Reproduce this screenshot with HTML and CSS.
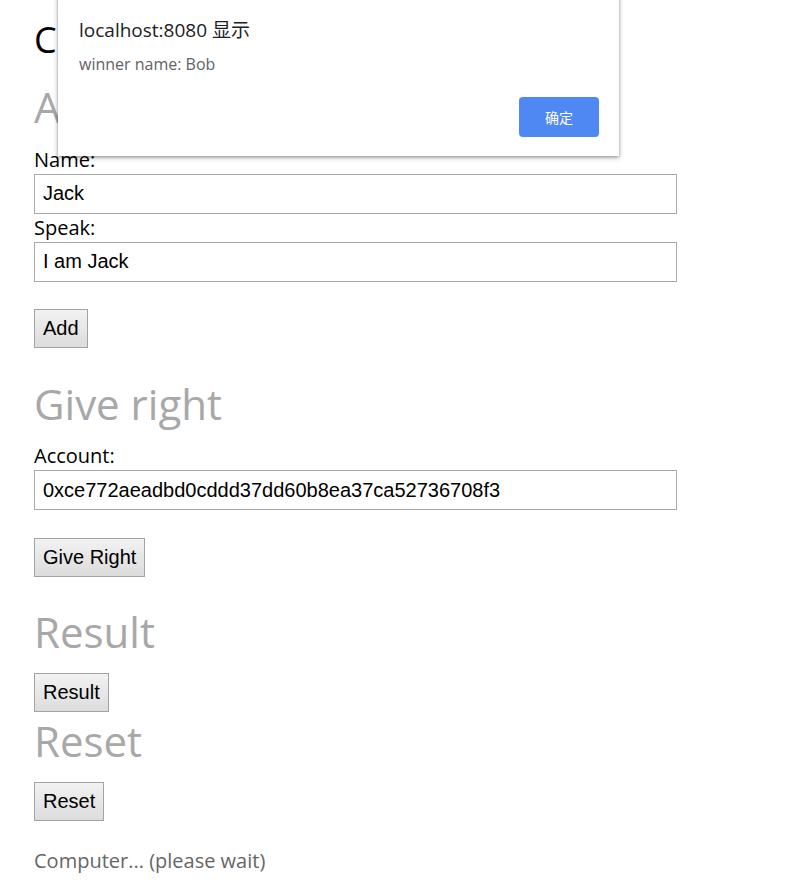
FILE: index.html
```html
<!DOCTYPE html>
<html lang="en">
<head>
<meta charset="utf-8">
<title>Candidates</title>
<link rel="stylesheet" href="styles.css">
</head>
<body>
<div class="page">
  <h1 class="title">Candidates</h1>

  <h2 class="section section-first">Add candidate</h2>
  <label class="field-label" for="name">Name:</label>
  <input class="text-input" id="name" type="text" value="Jack">
  <label class="field-label" for="speak">Speak:</label>
  <input class="text-input" id="speak" type="text" value="I am Jack">
  <div class="actions"><button class="btn">Add</button></div>

  <h2 class="section section-give">Give right</h2>
  <label class="field-label" for="account">Account:</label>
  <input class="text-input" id="account" type="text" value="0xce772aeadbd0cddd37dd60b8ea37ca52736708f3">
  <div class="actions actions-wide"><button class="btn">Give Right</button></div>

  <h2 class="section section-result">Result</h2>
  <div class="actions actions-tight"><button class="btn">Result</button></div>
  <h2 class="section section-reset">Reset</h2>
  <div class="actions actions-tight"><button class="btn">Reset</button></div>

  <p class="status">Computer... (please wait)</p>
</div>

<div class="alert" role="dialog">
  <div class="alert-title">localhost:8080 显示</div>
  <div class="alert-message">winner name: Bob</div>
  <div class="alert-actions"><button class="alert-ok">确定</button></div>
</div>
</body>
</html>
```

FILE: styles.css
```css
html, body {
  margin: 0;
  padding: 0;
  background: #ffffff;
}

body {
  font-family: "Open Sans", "Noto Sans CJK SC", sans-serif;
  color: #000;
}

.page {
  padding: 0 34px;
  display: flex;
  flex-direction: column;
  align-items: flex-start;
}

.title {
  font-family: "Open Sans", sans-serif;
  font-weight: 400;
  font-size: 36px;
  line-height: normal;
  margin: 15px 0 0;
  color: #000;
}

.section {
  font-family: "Open Sans", sans-serif;
  font-weight: 400;
  font-size: 42px;
  line-height: normal;
  color: #a8a8a8;
  margin: 0;
}

.section-first {
  margin: 14px 0 10.5px;
}

.section-give {
  margin: 27px 0 10.5px;
}

.section-result {
  margin: 26px 0 13px;
}

.section-reset {
  margin: 0 0 12.5px;
}

.field-label {
  display: block;
  font-size: 20px;
  line-height: 28px;
  color: #000;
}

.text-input {
  box-sizing: border-box;
  width: 643px;
  height: 40px;
  margin: 0;
  padding: 0 8px;
  border: 1px solid #a9a9a9;
  border-radius: 0;
  font-family: "Liberation Sans", Arial, sans-serif;
  font-size: 20px;
  color: #000;
  background: #fff;
  outline: none;
}

.actions {
  margin-top: 27px;
}

.actions-wide {
  margin-top: 28px;
}

.actions-tight {
  margin-top: 0;
}

.btn {
  box-sizing: border-box;
  height: 39px;
  margin: 0;
  padding: 0 8px;
  font-family: "Liberation Sans", Arial, sans-serif;
  font-size: 20px;
  color: #000;
  background: linear-gradient(#f2f2f2, #dcdcdc);
  border: 1px solid #a3a3a3;
  border-radius: 0;
}

.status {
  margin: 26px 0 0;
  font-size: 20px;
  line-height: normal;
  color: #666666;
}

.alert {
  position: absolute;
  left: 58px;
  top: -10px;
  box-sizing: border-box;
  width: 561px;
  height: 166px;
  padding: 27.2px 20px 19px 21px;
  background: #fff;
  box-shadow: 0 1px 3px rgba(0, 0, 0, 0.35), 0 2px 6px rgba(0, 0, 0, 0.18);
  display: flex;
  flex-direction: column;
  font-family: "Open Sans", "Noto Sans CJK SC", sans-serif;
}

.alert-title {
  font-size: 19px;
  line-height: 26px;
  color: #202124;
}

.alert-message {
  margin-top: 9.5px;
  font-size: 16px;
  line-height: 22px;
  color: #5f6368;
}

.alert-actions {
  margin-top: auto;
  display: flex;
  justify-content: flex-end;
}

.alert-ok {
  width: 80px;
  height: 40px;
  border: none;
  border-radius: 4px;
  background: #5088f3;
  color: #fff;
  font-family: "Noto Sans CJK SC", sans-serif;
  font-size: 14px;
  padding: 0;
}
```
